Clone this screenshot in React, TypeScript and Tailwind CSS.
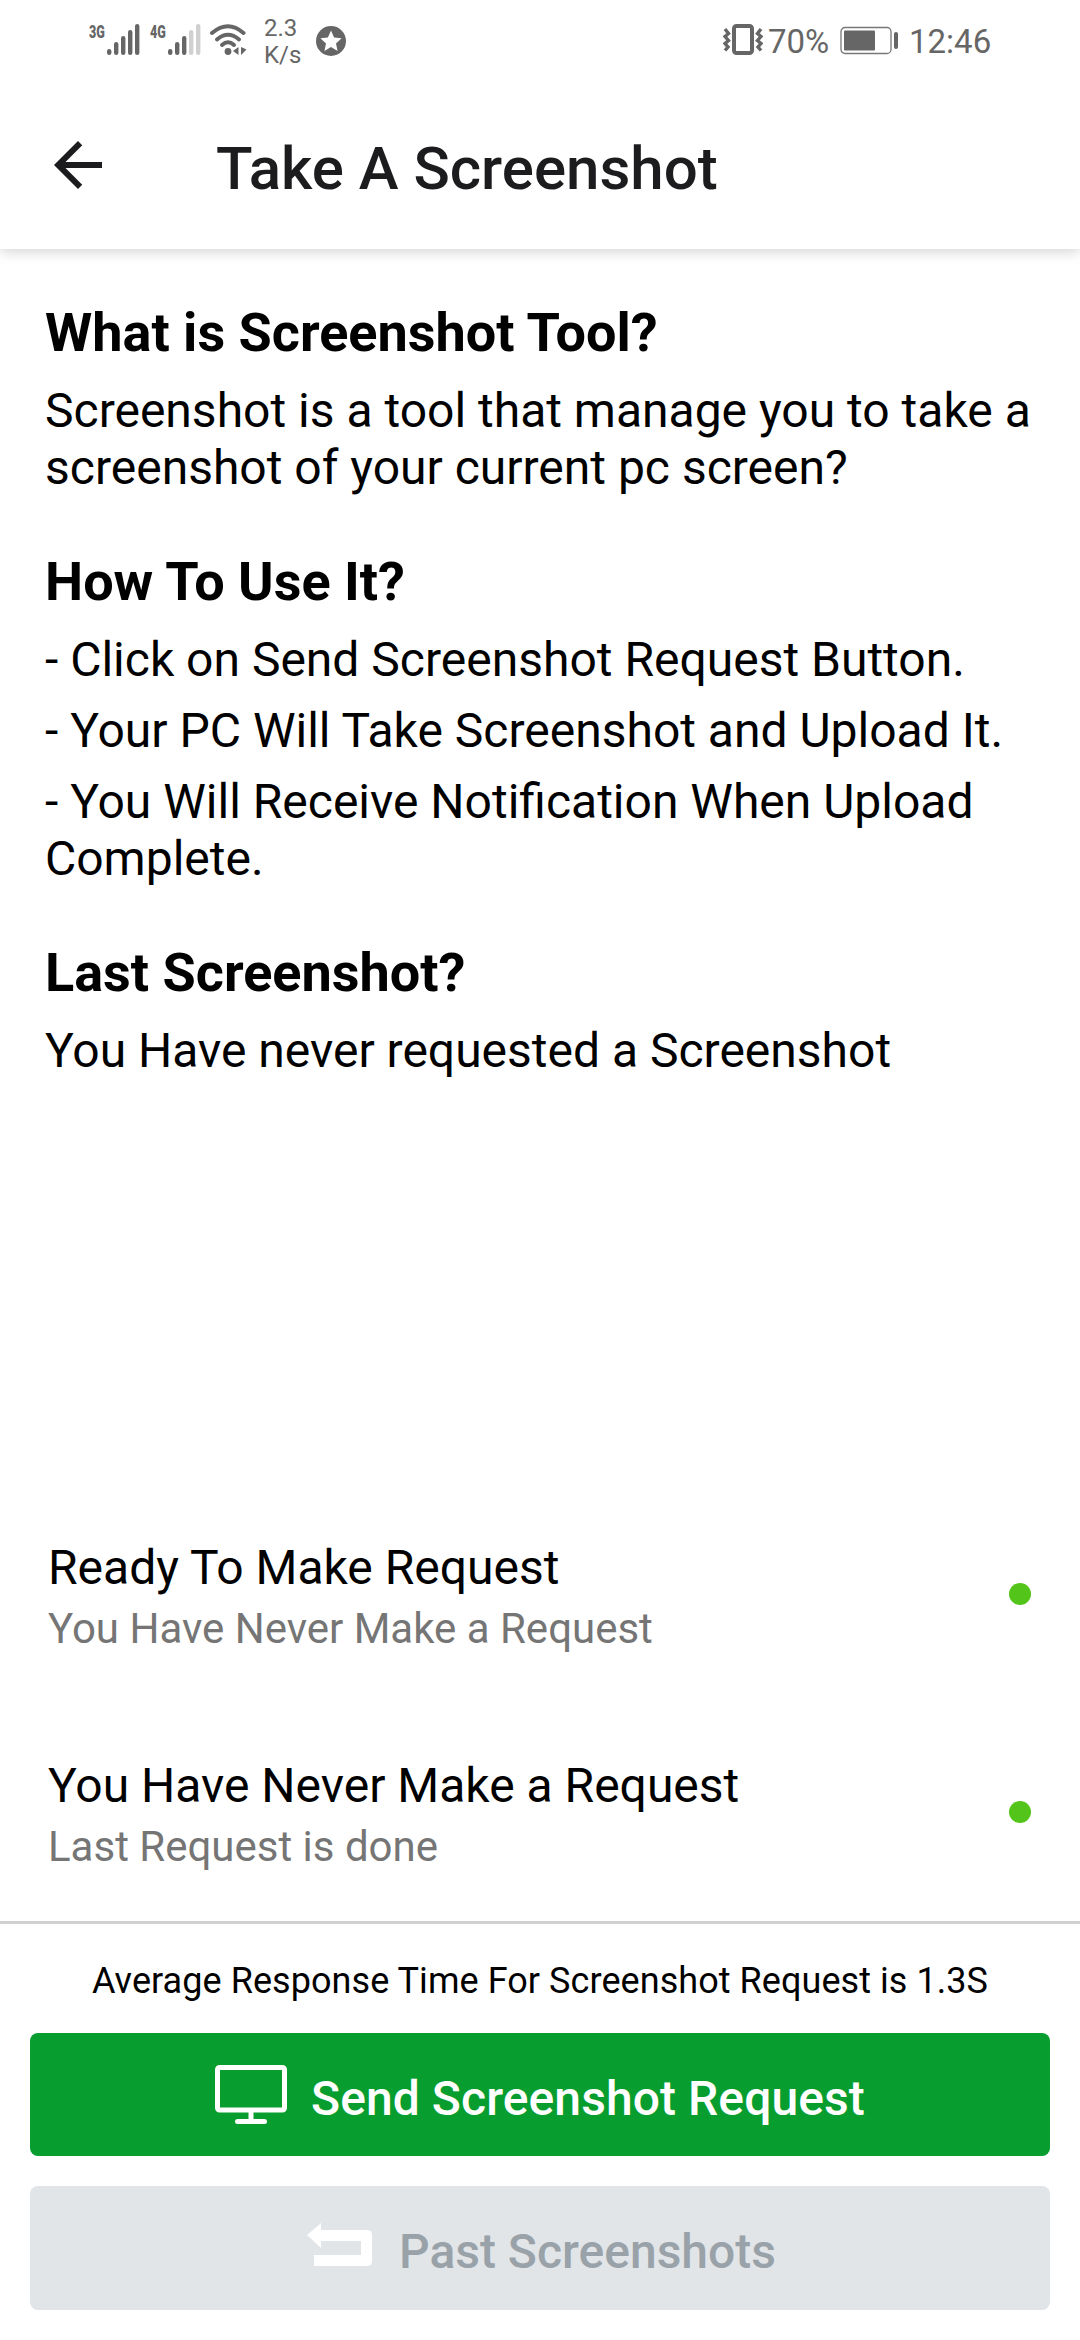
import type { ReactNode } from "react";

function Signal({ label, active }: { label: string; active: number }) {
  const heights = [6, 13, 19, 25, 31];
  return (
    <div className="flex items-start">
      <span className="mt-[1px] h-[14px] w-[18px] origin-left scale-x-[0.66] whitespace-nowrap text-[19px] font-black leading-[14px]">
        {label}
      </span>
      <svg className="h-[31px] w-[33px]" viewBox="0 0 33 31" fill="#666">
        {heights.map((h, i) => (
          <rect key={i} x={i * 7} y={31 - h} width="4.4" height={h} rx="2.2" fill={i < active ? "#666" : "#d0d0d0"} />
        ))}
      </svg>
    </div>
  );
}

function StatusBar() {
  return (
    <div className="flex h-[90px] items-start text-[#666]">
      <div className="ml-[89px] mt-[24px]">
        <Signal label="3G" active={5} />
      </div>
      <div className="ml-[10px] mt-[24px]">
        <Signal label="4G" active={3} />
      </div>
      <svg className="ml-[8px] mt-[24px] h-[32px] w-[38px]" viewBox="0 0 38 32" fill="none">
        <g stroke="#666" strokeWidth="4" strokeLinecap="round">
          <path d="M3 9Q19 -4.500 34.500 9" />
          <path d="M8 15.500Q19 6 30 15.500" />
          <path d="M13 21Q19 15.500 25 21" />
        </g>
        <circle cx="19" cy="27.500" r="3.400" fill="#666" />
        <path d="M29.500 23v8l-5.500-4zM32 23v8l5.500-5.500z" fill="#666" />
      </svg>
      <div className="ml-[17px] mt-[15px] w-[40px] text-[24px] leading-[27px]">
        <div>2.3</div>
        <div>K/s</div>
      </div>
      <svg className="ml-[12px] mt-[26px] h-[30px] w-[30px]" viewBox="0 0 30 30">
        <circle cx="15" cy="15" r="15" fill="#666" />
        <path d="M15 4.500l3.100 7 7.500.8-5.600 5.100 1.600 7.500-6.600-3.900-6.600 3.900L10 17.400l-5.600-5.100 7.500-.8z" fill="#fff" />
      </svg>
      <div className="grow" />
      <svg className="mt-[23px] h-[33px] w-[40px]" viewBox="0 0 40 33" fill="none" stroke="#666">
        <rect x="11" y="3" width="18" height="27" rx="2.500" strokeWidth="4" />
        <path d="M2 6l3.500 4.500-3.500 3 3.500 4-3.500 3 3 3.500-3 3.500M38 6l-3.500 4.500 3.500 3-3.500 4 3.500 3-3 3.500 3 3.500" strokeWidth="3.400" />
      </svg>
      <span className="ml-[5px] mt-[22px] w-[64px] whitespace-nowrap text-[33px] leading-[39px]">70%</span>
      <svg className="ml-[8px] mt-[26px] h-[29px] w-[59px]" viewBox="0 0 59 29">
        <rect x="1" y="1.500" width="50" height="26" rx="4" fill="none" stroke="#777" strokeWidth="1.300" />
        <rect x="4" y="4.500" width="31" height="20" rx="1" fill="#666" />
        <rect x="54" y="6" width="4" height="17" rx="2" fill="#666" />
      </svg>
      <span className="ml-[10px] mr-[88px] mt-[22px] w-[83px] whitespace-nowrap text-[33px] leading-[39px]">12:46</span>
    </div>
  );
}

function Section({ title, children }: { title: string; children: ReactNode }) {
  return (
    <section>
      <h2 className="text-[54px] font-bold leading-[64px]">{title}</h2>
      <div className="mt-[17px] flex flex-col gap-[14px] text-[48px] leading-[57px]">{children}</div>
    </section>
  );
}

function StatusRow({ title, subtitle }: { title: string; subtitle: string }) {
  return (
    <div className="flex h-[218px] items-center justify-between pl-[48px] pr-[49px]">
      <div className="pt-[5px]">
        <div className="text-[48px] leading-[57px]">{title}</div>
        <div className="mt-[8px] text-[42px] leading-[50px] text-[#757575]">{subtitle}</div>
      </div>
      <div className="h-[22px] w-[22px] rounded-full bg-[#52c41a]" />
    </div>
  );
}

export default function App() {
  return (
    <div className="flex h-[2340px] w-[1080px] flex-col overflow-hidden bg-white font-[Roboto,sans-serif] text-black">
      <header className="h-[249px] shrink-0 bg-white shadow-[0_3px_12px_rgba(0,0,0,0.17)]">
        <StatusBar />
        <div className="flex h-[156px] items-center pl-[42px] text-[#1c1c1e]">
          <svg className="h-[72px] w-[72px] -mt-[6px]" viewBox="0 0 24 24" fill="currentColor">
            <path d="M20 11H7.830l5.590-5.590L12 4l-8 8 8 8 1.410-1.410L7.830 13H20v-2z" />
          </svg>
          <h1 className="ml-[102px] mt-[1px] text-[60px] font-medium leading-[70px]">Take A Screenshot</h1>
        </div>
      </header>

      <main className="flex flex-col gap-[54px] px-[45px] pt-[52px]">
        <Section title="What is Screenshot Tool?">
          <p>
            Screenshot is a tool that manage you to take a<br />
            screenshot of your current pc screen?
          </p>
        </Section>
        <Section title="How To Use It?">
          <p>- Click on Send Screenshot Request Button.</p>
          <p>- Your PC Will Take Screenshot and Upload It.</p>
          <p>
            - You Will Receive Notification When Upload
            <br />
            Complete.
          </p>
        </Section>
        <Section title="Last Screenshot?">
          <p>You Have never requested a Screenshot</p>
        </Section>
      </main>

      <div className="mt-auto">
        <StatusRow title="Ready To Make Request" subtitle="You Have Never Make a Request" />
        <StatusRow title="You Have Never Make a Request" subtitle="Last Request is done" />
      </div>

      <footer className="h-[419px] shrink-0 border-t-[3px] border-[#d0d0d0] px-[30px] pt-[36px]">
        <p className="text-center text-[36px] leading-[42px] tracking-[0.06px]">Average Response Time For Screenshot Request is 1.3S</p>
        <button className="mt-[31px] flex h-[123px] w-full items-center rounded-[8px] bg-[#079e2f] pl-[185px] text-[48px] font-medium text-white">
          <svg className="h-[59px] w-[72px]" viewBox="0 0 72 59" fill="none" stroke="#fff">
            <rect x="2.500" y="2.500" width="67" height="42.500" rx="2" strokeWidth="5" />
            <path d="M36 46v10" strokeWidth="5" />
            <path d="M22.500 56.500h27" strokeWidth="5" strokeLinecap="round" />
          </svg>
          <span className="ml-[24px] mt-[8px] leading-[57px] tracking-[0.08px]">Send Screenshot Request</span>
        </button>
        <button className="mt-[30px] flex h-[124px] w-full items-center rounded-[8px] bg-[#e1e5e8] pl-[277px] text-[48px] font-medium text-[#99a2a9]">
          <svg className="h-[43px] w-[65px] -mt-[7px]" viewBox="0 0 65 43" fill="#fff">
            <path d="M0 12L14 0V7H60Q65 7 65 12V38Q65 43 60 43H7V32H54V18H14V25z" />
          </svg>
          <span className="ml-[27px] mt-[7px] leading-[57px]">Past Screenshots</span>
        </button>
      </footer>
    </div>
  );
}
